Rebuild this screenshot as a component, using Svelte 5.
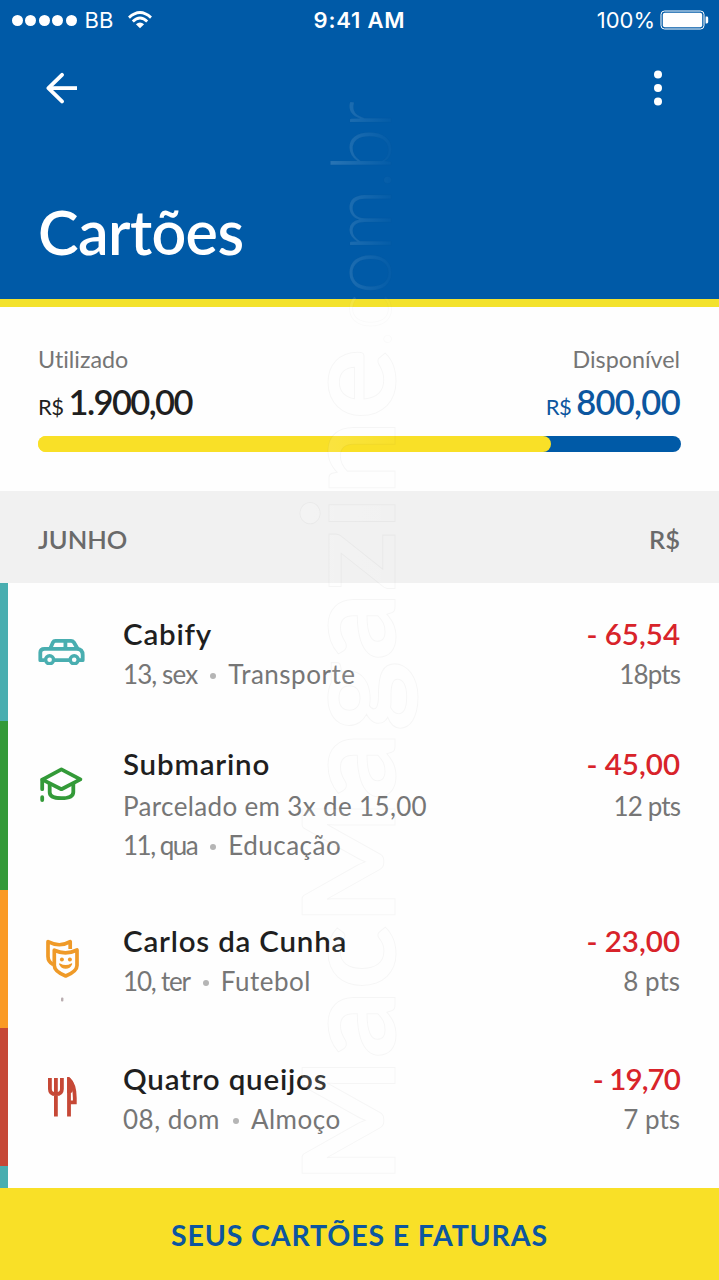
<script lang="ts">
    type Entry = {
        name: string;
        note?: string;
        date: string;
        category: string;
        amount: string;
        points: string;
        kind: "car" | "school" | "mask" | "food";
    };

    const used = 1900;
    const available = 800;
    // the bar is a little longer than the plain ratio
    const usedWidth = (used / (used + available)) * 100 + 9.4;

    const entries: Entry[] = [
        { name: "Cabify", date: "13, sex", category: "Transporte", amount: "- 65,54", points: "18pts", kind: "car" },
        { name: "Submarino", note: "Parcelado em 3x de 15,00", date: "11, qua", category: "Educação", amount: "- 45,00", points: "12 pts", kind: "school" },
        { name: "Carlos da Cunha", date: "10, ter", category: "Futebol", amount: "- 23,00", points: "8 pts", kind: "mask" },
        { name: "Quatro queijos", date: "08, dom", category: "Almoço", amount: "- 19,70", points: "7 pts", kind: "food" },
    ];

    // figures with a 1 are tracked tighter
    const hasOne = (text: string) => text.includes("1");
</script>

<div class="screen">
    <header>
        <div class="status">
            <div class="carrier">
                <div class="signal">
                    {#each Array(5) as _}<i></i>{/each}
                </div>
                <span>BB</span>
                <svg class="wifi" width="24" height="18" viewBox="0 0 24 18" fill="none" stroke="#fff" stroke-width="2.8">
                    <path d="M1 6.6Q12 -3.6 23 6.6" />
                    <path d="M4.8 10.6Q12 3.6 19.2 10.6" />
                    <path d="M12 17.2L7.9 13.2Q12 9.8 16.1 13.2Z" fill="#fff" stroke="none" />
                </svg>
            </div>
            <span class="clock">9:41 AM</span>
            <div class="power">
                <span>100%</span>
                <svg width="49" height="20" viewBox="0 0 49 20">
                    <rect x="1" y="1" width="43" height="18" rx="3.5" fill="none" stroke="#fff" stroke-width="1" />
                    <rect x="2.8" y="2.8" width="39.4" height="14.4" rx="2" fill="#fff" />
                    <path d="M45.6 6.5h1.2q1.4 0 1.4 1.4v4.2q0 1.4-1.4 1.4h-1.2z" fill="#fff" />
                </svg>
            </div>
        </div>
        <nav>
            <button aria-label="Voltar">
                <svg width="32" height="32" viewBox="0 0 32 32" fill="none" stroke="#fff" stroke-width="3.8" stroke-linecap="round" stroke-linejoin="round">
                    <path d="M17 2.8L3.4 16.1L17 29.4" />
                    <path d="M4 16.1H32" stroke-linecap="butt" />
                </svg>
            </button>
            <button aria-label="Mais opções">
                <svg width="8" height="36" viewBox="0 0 8 36" fill="#fff">
                    <circle cx="4" cy="4.6" r="4" />
                    <circle cx="4" cy="18" r="4" />
                    <circle cx="4" cy="31.4" r="4" />
                </svg>
            </button>
        </nav>
        <h1>Cartões</h1>
    </header>

    <section class="summary">
        <div class="totals">
            <div>
                <p class="label">Utilizado</p>
                <p class="value used"><small>R$</small>1.900,00</p>
            </div>
            <div class="right">
                <p class="label">Disponível</p>
                <p class="value blue"><small>R$</small>800,00</p>
            </div>
        </div>
        <div class="bar">
            <div class="bar-used" style="width: {usedWidth}%"></div>
        </div>
    </section>

    <div class="month">
        <span>JUNHO</span>
        <span>R$</span>
    </div>

    <main>
        {#each entries as entry}
            <article class={entry.kind}>
                <div class="icon">
                    {#if entry.kind === "car"}
                        <svg width="48" height="27" viewBox="0 0 48 27" fill="none" stroke="currentColor" stroke-width="3.8" stroke-linejoin="round">
                            <path d="M6.6 22.2H2.3V14.5Q2.3 10.8 6.5 10.8H38.5Q44.7 10.8 44.7 17V22.2H41M16.2 22.2H31.2" />
                            <path d="M12.2 10.8L15 4.3Q15.7 2.9 17.4 2.9H33Q34.8 2.9 35.8 4.3L39.6 10.8M27.4 3V10.8" />
                            <circle cx="11.6" cy="21.8" r="4" stroke-width="3.4" />
                            <circle cx="36.2" cy="21.8" r="4" stroke-width="3.4" />
                        </svg>
                    {:else if entry.kind === "school"}
                        <svg width="44" height="38" viewBox="0 0 44 38" fill="none" stroke="currentColor" stroke-width="3.8" stroke-linejoin="round" stroke-linecap="round">
                            <path d="M3.4 13.6L22.4 3.4L41.4 13.4L22.4 23.2Z" />
                            <path d="M10.7 17.6V26.2Q10.7 32.2 22.4 32.2T34.3 26.2V17.6" />
                            <path d="M3.2 13.6V23.2M3.2 31.2V34" />
                        </svg>
                    {:else if entry.kind === "mask"}
                        <svg width="36" height="66" viewBox="0 0 36 66" fill="none" stroke="currentColor" stroke-width="3.7" stroke-linejoin="round">
                            <path d="M9.3 26.7Q4 23.8 4 18.5V3.7Q15.6 9.8 26.2 3.7V11" />
                            <path d="M10.3 12.2Q21.7 17.5 33 12V27.5Q33 33.4 21.7 38Q10.3 33.4 10.3 27.5Z" />
                            <path d="M15.7 26Q17.6 30.1 21.7 30.1T27.5 26Q21.7 29.5 15.7 26Z" fill="currentColor" stroke-width="1.4" />
                            <circle cx="17.9" cy="21.4" r="2" fill="currentColor" stroke="none" />
                            <circle cx="25.9" cy="21.4" r="2" fill="currentColor" stroke="none" />
                            <rect x="17" y="59.5" width="2.4" height="4" rx="1" fill="#b9adb0" stroke="none" />
                        </svg>
                    {:else}
                        <svg width="31" height="40" viewBox="0 0 31 40" fill="none" stroke="currentColor" stroke-width="3.8">
                            <path d="M2.9 1V12Q2.9 17.2 8.9 17.2T14.9 12V1M8.9 1V39.5" />
                            <path d="M22 39.5V2.4Q27.8 7.5 27.8 21V25.4H23" />
                            <path d="M20.1 1.5Q20.1 0 22 .4Q25.5 2.4 27.2 8L25.4 15L24 16H20.1Z" fill="currentColor" stroke="none" />
                        </svg>
                    {/if}
                </div>
                <div class="details">
                    <h2>{entry.name}</h2>
                    {#if entry.note}
                        <p class="note">{entry.note}</p>
                    {/if}
                    <p class="when"><span class:tight={hasOne(entry.date)}>{entry.date}</span><i></i>{entry.category}</p>
                </div>
                <div class="cost">
                    <p class="amount" class:tight={hasOne(entry.amount)}>{entry.amount}</p>
                    <p class="points" class:tight={hasOne(entry.points)}>{entry.points}</p>
                </div>
            </article>
        {/each}
        <article class="next"></article>
    </main>

    <button class="footer">SEUS CARTÕES E FATURAS</button>

    <svg class="watermark" width="719" height="1280" viewBox="0 0 719 1280">
        <defs>
            <linearGradient id="fade" x1="0" y1="1" x2="0" y2="0">
                <stop offset="0.2" stop-color="#fff" stop-opacity="0.02" />
                <stop offset="0.8" stop-color="#fff" stop-opacity="0.16" />
            </linearGradient>
        </defs>
        <g transform="translate(395 1184) rotate(-90)" fill="url(#fade)" stroke="#000" stroke-opacity="0.035">
            <text class="brand" x="0" y="0" textLength="836" lengthAdjust="spacingAndGlyphs">MacMagazine</text>
            <text class="domain" x="836" y="-4" textLength="247" lengthAdjust="spacingAndGlyphs">.com.br</text>
        </g>
    </svg>
</div>

<style>
    :global(body) {
        background: #fff;
    }

    .screen {
        position: relative;
        display: flex;
        flex-direction: column;
        width: 719px;
        height: 1280px;
        overflow: hidden;
        background: #fefefe;
        color: #1f1f1f;
        font-family: Lato, "Open Sans", sans-serif;
        font-variant-ligatures: none;
    }

    h1,
    h2,
    p {
        margin: 0;
        white-space: nowrap;
    }

    button {
        padding: 0;
        border: 0;
        background: none;
        font-family: inherit;
    }

    svg {
        display: block;
    }

    header {
        box-sizing: border-box;
        height: 307px;
        flex-shrink: 0;
        border-bottom: 8px solid #f3e22c;
        background: #005aa7;
        color: #fff;
    }

    .status {
        display: grid;
        grid-template-columns: 1fr auto 1fr;
        align-items: center;
        height: 40px;
        padding: 0 10px 0 12px;
        font-family: Inter, sans-serif;
        font-size: 22px;
    }

    .carrier,
    .power,
    .signal {
        display: flex;
        align-items: center;
    }

    .signal {
        gap: 2.4px;
        margin-right: 8px;
    }

    .signal i {
        width: 11px;
        height: 11px;
        border-radius: 50%;
        background: #fff;
    }

    .wifi {
        margin-left: 15px;
    }

    .clock {
        margin-right: 2px;
        font-weight: 600;
        letter-spacing: 0.8px;
    }

    .power {
        justify-content: flex-end;
        gap: 5px;
    }

    nav {
        display: flex;
        align-items: center;
        justify-content: space-between;
        height: 96px;
        padding: 0 57px 0 45px;
    }

    h1 {
        padding: 58px 0 0 38px;
        font-size: 61px;
        font-weight: 600;
        line-height: 76px;
        letter-spacing: -0.6px;
    }

    .summary {
        box-sizing: border-box;
        height: 184px;
        flex-shrink: 0;
        padding: 36px 38px 0;
    }

    .totals {
        display: flex;
        justify-content: space-between;
        padding-right: 1px;
    }

    .right {
        text-align: right;
    }

    .label {
        color: #757575;
        font-size: 23.3px;
        line-height: 32px;
    }

    .value {
        font-size: 34.5px;
        font-weight: 600;
        line-height: 54px;
        letter-spacing: -0.7px;
    }

    .value small {
        margin-right: 5px;
        font-size: 22px;
        font-weight: 400;
        letter-spacing: -0.5px;
    }

    .value.used {
        letter-spacing: -1.6px;
    }

    .blue {
        color: #0c569f;
    }

    .bar {
        height: 16px;
        margin-top: 2px;
        border-radius: 8px;
        background: linear-gradient(90deg, #f9e027 50%, #005aa7 50%);
    }

    .bar-used {
        height: 100%;
        border-radius: 8px;
        background: #f9e027;
    }

    .month {
        display: flex;
        align-items: center;
        justify-content: space-between;
        box-sizing: border-box;
        height: 92px;
        flex-shrink: 0;
        padding: 4px 39px 0 38px;
        background: #f1f1f1;
        color: #6a6a6a;
        font-size: 25.5px;
        font-weight: 600;
    }

    main {
        flex: 1;
    }

    article {
        display: flex;
        box-sizing: border-box;
        height: 138px;
        padding: 32px 39px 0 30px;
        border-left: 8px solid;
    }

    .car {
        color: #49aeb0;
    }

    .school {
        height: 169px;
        padding-top: 24px;
        color: #339a38;
    }

    .mask {
        padding-top: 32px;
        color: #ef9a28;
        border-left-color: #fa9a25;
    }

    .food {
        color: #c64836;
    }

    .next {
        height: 22px;
        padding: 0;
        color: #49aeb0;
    }

    .icon {
        width: 85px;
        flex-shrink: 0;
    }

    .car .icon {
        padding-top: 23px;
    }

    .school .icon {
        padding: 21px 0 0 1px;
        width: 84px;
    }

    .mask .icon {
        padding: 16px 0 0 6px;
        width: 79px;
    }

    .food .icon {
        padding: 17px 0 0 9px;
        width: 76px;
    }

    .details {
        flex: 1;
        color: #767676;
        font-size: 26px;
        line-height: 42px;
        letter-spacing: 0.5px;
    }

    h2 {
        color: #1f1f1f;
        font-size: 29.5px;
        font-weight: 600;
        line-height: 38px;
        letter-spacing: 0.8px;
    }

    .note {
        padding-top: 4px;
        line-height: 38px;
        letter-spacing: 0.35px;
    }

    .when i {
        display: inline-block;
        width: 6px;
        height: 6px;
        margin: 0 12px 0 13px;
        border-radius: 50%;
        background: #b5b5b5;
        vertical-align: 5px;
    }

    .school .when {
        line-height: 40px;
    }

    .cost {
        color: #767676;
        font-size: 26px;
        line-height: 42px;
        text-align: right;
    }

    .amount {
        color: #d8232a;
        font-size: 29.5px;
        font-weight: 600;
        line-height: 38px;
    }

    .school .points {
        padding-top: 2px;
    }

    .tight {
        letter-spacing: -0.9px;
    }

    .school .when .tight {
        letter-spacing: -1.5px;
    }

    .mask .when .tight {
        letter-spacing: -1.2px;
    }

    .footer {
        height: 92px;
        flex-shrink: 0;
        padding-top: 2px;
        background: #f9e027;
        color: #0c569f;
        font-size: 28.5px;
        font-weight: 700;
        letter-spacing: 0.85px;
    }

    .watermark {
        position: absolute;
        inset: 0;
        pointer-events: none;
    }

    .brand {
        font-size: 128px;
        font-weight: 700;
    }

    .domain {
        font-size: 83px;
        font-weight: 300;
        stroke-opacity: 0.02;
    }
</style>
